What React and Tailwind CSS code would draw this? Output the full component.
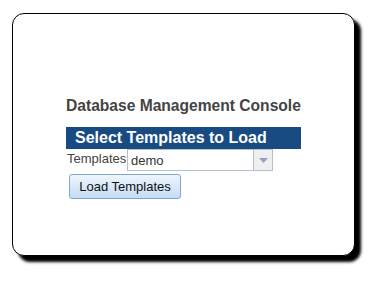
import React from "react";

export default function App() {
  return (
    <div
      className="w-[380px] h-[286px] bg-white overflow-hidden"
      style={{ fontFamily: '"Liberation Sans", Arial, sans-serif' }}
    >
      <div className="ml-[12px] mt-[13px] w-[343px] h-[243px] border border-black rounded-[12px] bg-white shadow-[6px_6px_3px_#000] pt-[83px] pl-[53px]">
        <div className="w-[235px]">
          <h1 className="text-[15.6px] leading-[18px] font-bold text-[#444]">
            Database Management Console
          </h1>

          {/* Header bar */}
          <div className="mt-[12px] h-[22px] bg-[#174b82] pl-[9px] text-white text-[16px] leading-[22px] font-bold">
            Select Templates to Load
          </div>

          {/* Select row */}
          <div className="flex items-center h-[22px]">
            <span className="w-[61px] pl-[1px] text-[13px] text-[#444] leading-[22px] -mt-[2px]">
              Templates
            </span>
            <div className="flex w-[146px] h-[22px] border border-[#b5bfd0] bg-white">
              <span className="flex-1 pl-[3px] text-[13px] leading-[21px] text-[#333]">
                demo
              </span>
              <span className="w-[19px] border-l border-[#b5bfd0] bg-[#efefef] flex items-center justify-center">
                <svg width="9" height="5" viewBox="0 0 9 5">
                  <path d="M0 0h9L4.5 5z" fill="#8fa4c8" />
                </svg>
              </span>
            </div>
          </div>

          <button
            type="button"
            className="mt-[3px] ml-[3px] w-[112px] h-[25px] rounded-[3px] border border-[#7fa7d2] bg-gradient-to-b from-[#eef5fd] to-[#c5dcf4] text-[13px] text-[#111] leading-[23px]"
          >
            Load Templates
          </button>
        </div>
      </div>
    </div>
  );
}
